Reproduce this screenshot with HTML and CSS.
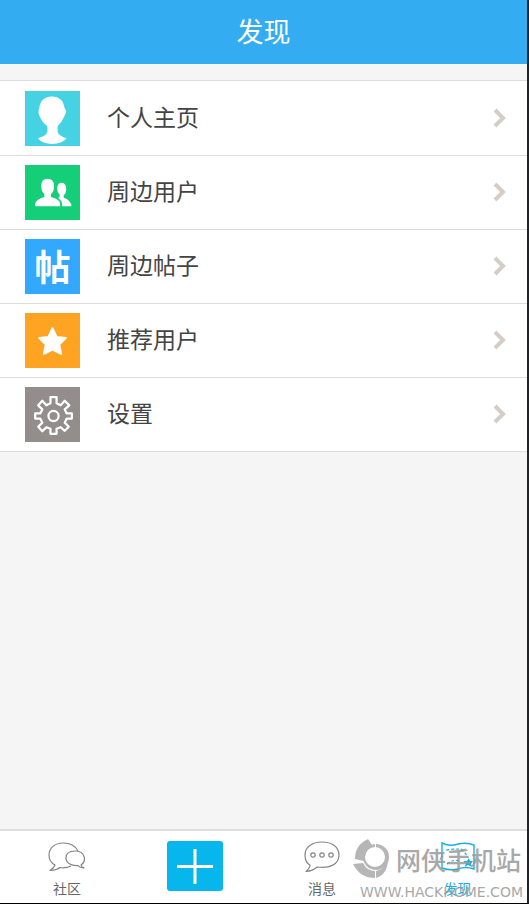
FILE: index.html
```
<!DOCTYPE html>
<html lang="zh-CN">
<head>
<meta charset="utf-8">
<meta name="viewport" content="width=device-width, initial-scale=1">
<title>发现</title>
<link rel="stylesheet" href="styles.css">
</head>
<body>
<div class="app">
  <header class="header"><h1 class="title">发现</h1></header>
  <main class="content">
    <ul class="menu">
      <li><a class="row" href="#profile">
        <span class="tile tile-cyan"><svg viewBox="0 0 54 54" aria-hidden="true"><path fill="#fff" d="M26 5.500C31 5 36 8 37.500 12L39 17Q41.500 20 39.500 23L38 26Q36 31 32 34.500V40Q33 44 41 46.500Q36 52 27 52Q17 52 12.500 46.500Q21 44 22 40V34.500Q17 31 15 26Q12 21 14 17C14.500 10 19 6 26 5.500Z"/></svg></span>
        <span class="label">个人主页</span>
        <svg class="chevron" viewBox="0 0 14 22" aria-hidden="true"><path d="M3 3L11 11L3 19"/></svg>
      </a></li>
      <li><a class="row" href="#nearby-users">
        <span class="tile tile-green"><svg viewBox="0 0 54 54" aria-hidden="true"><path fill="#fff" d="M10 40.500V37.500Q11 34 19 31.500V28.500Q16 26 16 20.500Q16 13.500 22 13.500Q28.500 13.500 28.500 20.500Q28.500 26 25.500 28.500V31.500Q34.500 34 34.500 38V40.500Z"/><path fill="#fff" d="M36.500 40.500Q37 35.500 32.500 32.500L34 31V29Q31.500 26.500 31.500 23Q32 17.500 36 17.500Q40.500 17.500 40.500 24Q40.500 27.500 38 30V32Q45.500 35 45.500 40.500Z"/></svg></span>
        <span class="label">周边用户</span>
        <svg class="chevron" viewBox="0 0 14 22" aria-hidden="true"><path d="M3 3L11 11L3 19"/></svg>
      </a></li>
      <li><a class="row" href="#nearby-posts">
        <span class="tile tile-blue">帖</span>
        <span class="label">周边帖子</span>
        <svg class="chevron" viewBox="0 0 14 22" aria-hidden="true"><path d="M3 3L11 11L3 19"/></svg>
      </a></li>
      <li><a class="row" href="#recommended">
        <span class="tile tile-orange"><svg viewBox="0 0 54 54" aria-hidden="true"><path fill="#fff" stroke="#fff" stroke-width="2" stroke-linejoin="round" d="M27 15L31 23.500L40 24.500L33.500 31L35.500 40L27 36L18.500 40L20.500 31L14 24.500L23 23.500Z"/></svg></span>
        <span class="label">推荐用户</span>
        <svg class="chevron" viewBox="0 0 14 22" aria-hidden="true"><path d="M3 3L11 11L3 19"/></svg>
      </a></li>
      <li><a class="row" href="#settings">
        <span class="tile tile-gray"><svg viewBox="0 0 54 54" aria-hidden="true"><g fill="none" stroke="#fff" stroke-width="2.200" stroke-linejoin="round"><path d="M25 10H31V16L35 18L39 13.500L43.500 18L39 22L41 26H46V31H41L39 35L43 39L39 43L35 39.500L31 41V46H25V41L21 39.500L17 43.500L13 39L17 35L15 31H10V26H15L17 22L13 18L17 13.500L21 18L25 16Z"/><circle cx="28" cy="28.500" r="5"/></g></svg></span>
        <span class="label">设置</span>
        <svg class="chevron" viewBox="0 0 14 22" aria-hidden="true"><path d="M3 3L11 11L3 19"/></svg>
      </a></li>
    </ul>
  </main>
  <nav class="tabs">
    <a class="tab" href="#community">
      <svg class="tab-icon" viewBox="0 0 38 32" aria-hidden="true"><g fill="none" stroke="#858585" stroke-width="1.200" stroke-linejoin="round"><path d="M30 10C27 4 21 2 15 2C7 2 1 7 1 14C1 19 3 22 7 24Q6 27 2 29.500Q9 29 12 26.500Q18 27.500 23 25"/><path d="M33 24C39 20 37 10 27 10C21 10 18 13 18 17C18 22 23 25 30 24.500Q32 27 36 27Q33 25.500 33 24Z"/></g></svg>
      <span>社区</span>
    </a>
    <div class="tab">
      <button class="add" type="button" aria-label="发布"><svg viewBox="0 0 56 50" aria-hidden="true"><path d="M28 8V43M10 25.500H46" stroke="#fff" stroke-width="3"/></svg></button>
    </div>
    <a class="tab" href="#messages">
      <svg class="tab-icon" viewBox="0 0 38 32" aria-hidden="true"><g fill="none" stroke="#858585" stroke-width="1.200" stroke-linejoin="round"><path d="M7 24C3 22 2 18 2 14C2 6 9 1 19 1C29 1 36 6 36 14C36 23 27 28 14 26Q10 30 3 30.500Q7 27 7 24Z"/><circle cx="10" cy="14" r="2.200"/><circle cx="19" cy="14" r="2.200"/><circle cx="28" cy="14" r="2.200"/></g></svg>
      <span>消息</span>
    </a>
    <a class="tab tab-active" href="#discover">
      <svg class="tab-icon" viewBox="0 0 38 32" aria-hidden="true"><path fill="none" stroke="#1aafe4" stroke-width="1.400" d="M3 2Q11 6 19 3Q28 1 35 4V28Q27 25 19 28Q11 30 3 27Z"/><path fill="none" stroke="#1aafe4" stroke-width="1.200" stroke-dasharray="3 2" d="M7 9Q15 8 22 8Q28 13 29 17M8 23Q14 18 20 20"/><path fill="#1aafe4" d="M30 17L31 20L34 20L32 23L33 26L29 24L26 26L27 22L24 20L28 20Z"/></svg>
      <span>发现</span>
    </a>
  </nav>
  <div class="watermark">
    <div class="brand">
      <svg class="brand-logo" viewBox="0 0 37 40" aria-hidden="true"><g fill="#aaa"><path d="M15 0L19 6Q12 11 11 22L2 20Q2 6 15 0Z"/><path d="M0 25L10 24Q14 32 22 32V39Q7 39 0 25Z"/><path d="M23 32Q32 30 33 23L35 21Q34 36 23 39Z"/><path fill-rule="evenodd" d="M23 5A13 13 0 1 1 23 31A13 13 0 1 1 23 5ZM22 8A10 10 0 1 0 22 28A10 10 0 1 0 22 8Z"/></g><path d="M22.500 3V10" stroke="#fff"/></svg>
      <span>网侠手机站</span>
    </div>
    <div class="site">WWW.HACKHOME.COM</div>
  </div>
</div>
</body>
</html>
```
FILE: styles.css
```
* { box-sizing: border-box; }

body {
  margin: 0;
  font-family: "Noto Sans CJK SC", sans-serif;
  color: #444;
  background: #f5f5f5;
}

.app {
  position: relative;
  display: flex;
  flex-direction: column;
  min-height: 100vh;
  border-right: 2px solid #202428;
  border-bottom: 1px solid #000;
}

.header {
  display: flex;
  align-items: center;
  justify-content: center;
  height: 64px;
  padding-bottom: 2px;
  background: #33acf2;
}

.title {
  margin: 0;
  font-size: 27px;
  font-weight: 400;
  line-height: 40px;
  color: #fff;
}

.content {
  flex: 1;
  padding-top: 16px;
}

.menu {
  margin: 0;
  padding: 1px 0 0;
  list-style: none;
  border-top: 1px solid #dedede;
  background: #fff;
}

.row {
  display: flex;
  align-items: center;
  height: 74px;
  padding: 0 21px 0 25px;
  border-bottom: 1px solid #dedede;
  color: inherit;
  text-decoration: none;
}

.tile {
  display: flex;
  align-items: center;
  justify-content: center;
  width: 55px;
  height: 55px;
  margin-right: 27px;
  color: #fff;
  font-size: 36px;
  font-weight: 700;
  line-height: 50px;
}

.tile svg { width: 100%; height: 100%; }
.tile-cyan { background: #45d2e2; }
.tile-green { background: #15cf78; }
.tile-blue { padding-bottom: 4px; background: #33a8ff; }
.tile-orange { background: #ffa322; }
.tile-gray { background: #938e8c; }

.label {
  flex: 1;
  padding-bottom: 5px;
  font-size: 23px;
  line-height: 34px;
}

.chevron {
  width: 14px;
  height: 22px;
  margin-bottom: 2px;
  fill: none;
  stroke: #d5cdc8;
  stroke-width: 4;
}

.tabs {
  display: grid;
  grid-template-columns: 134fr 122fr 132fr 139fr;
  height: 74px;
  border-top: 2px solid #dedede;
  background: #fff;
}

.tab {
  display: flex;
  flex-direction: column;
  align-items: center;
  padding-top: 10px;
  font-size: 14px;
  line-height: 20px;
  color: #666;
  text-decoration: none;
}

.tab-icon {
  width: 38px;
  height: 32px;
  margin-bottom: 5px;
}

.tab-active { color: #1aafe4; }

.add {
  width: 56px;
  height: 50px;
  padding: 0;
  border: 0;
  border-radius: 3px;
  background: #08b6ee;
}

.add svg { display: block; width: 100%; height: 100%; }

.watermark {
  position: absolute;
  right: 4px;
  bottom: 1px;
  display: flex;
  flex-direction: column;
  align-items: flex-end;
  gap: 3px;
  color: #999;
  opacity: .85;
  pointer-events: none;
}

.brand {
  display: flex;
  align-items: center;
  gap: 6px;
  padding-right: 2px;
  font-size: 25px;
  font-weight: 500;
  line-height: 40px;
}

.brand-logo { width: 37px; height: 40px; }

.site {
  font-family: "DejaVu Sans", sans-serif;
  font-size: 14px;
  line-height: 20px;
}
```
